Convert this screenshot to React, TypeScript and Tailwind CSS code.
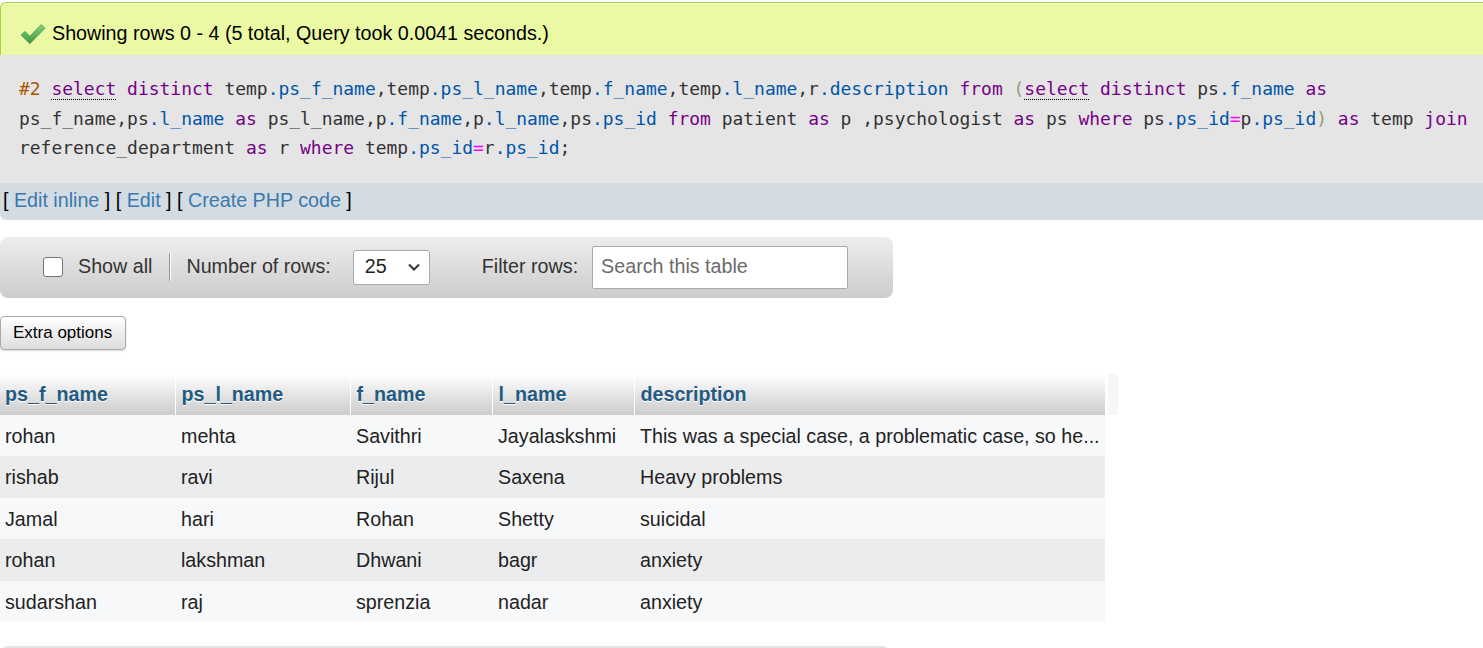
import React from "react";

type Tok = [string, string?];

const C: Record<string, string> = {
  c: "text-[#aa5500]",
  k: "text-[#770088]",
  v: "text-[#0055aa]",
  o: "text-[#ff00ff]",
  b: "text-[#999977]",
  u: "text-[#770088] border-b border-dotted border-black",
};

const lines: Tok[][] = [
  [
    ["#2", "c"], [" "], ["select", "u"], [" "], ["distinct", "k"], [" temp"], [".ps_f_name", "v"], [",temp"], [".ps_l_name", "v"], [",temp"], [".f_name", "v"], [",temp"], [".l_name", "v"], [",r"], [".description", "v"], [" "], ["from", "k"], [" "], ["(", "b"], ["select", "u"], [" "], ["distinct", "k"], [" ps"], [".f_name", "v"], [" "], ["as", "k"],
  ],
  [
    ["ps_f_name,ps"], [".l_name", "v"], [" "], ["as", "k"], [" ps_l_name,p"], [".f_name", "v"], [",p"], [".l_name", "v"], [",ps"], [".ps_id", "v"], [" "], ["from", "k"], [" patient "], ["as", "k"], [" p ,psychologist "], ["as", "k"], [" ps "], ["where", "k"], [" ps"], [".ps_id", "v"], ["=", "o"], ["p"], [".ps_id", "v"], [")", "b"], [" "], ["as", "k"], [" temp "], ["join", "k"],
  ],
  [
    ["reference_department "], ["as", "k"], [" r "], ["where", "k"], [" temp"], [".ps_id", "v"], ["=", "o"], ["r"], [".ps_id", "v"], [";"],
  ],
];

const rows = [
  ["rohan", "mehta", "Savithri", "Jayalaskshmi", "This was a special case, a problematic case, so he..."],
  ["rishab", "ravi", "Rijul", "Saxena", "Heavy problems"],
  ["Jamal", "hari", "Rohan", "Shetty", "suicidal"],
  ["rohan", "lakshman", "Dhwani", "bagr", "anxiety"],
  ["sudarshan", "raj", "sprenzia", "nadar", "anxiety"],
];

const cols = ["ps_f_name", "ps_l_name", "f_name", "l_name", "description"];
const widths = ["w-[175px]", "w-[175px]", "w-[142px]", "w-[142px]", "w-[471px]"];
const pads = ["pl-[5px]", "pl-[6px]", "pl-[6px]", "pl-[6px]", "pl-[6px]"];

function Check() {
  return (
    <svg width="26" height="24" viewBox="0 0 25 23" className="shrink-0 mt-[1px]">
      <defs>
        <linearGradient id="g" x1="0" y1="0" x2="0" y2="1">
          <stop offset="0" stopColor="#86d07a" />
          <stop offset="1" stopColor="#3f9a42" />
        </linearGradient>
      </defs>
      <path d="M1 12.5 L4.8 9 L9.5 13.6 L20.5 2.5 L24 6 L9.5 20.8 Z" fill="url(#g)" stroke="#4c9f4c" strokeWidth="0.8" strokeLinejoin="round" />
    </svg>
  );
}

export default function App() {
  return (
    <div className="h-[648px] w-[1483px] overflow-hidden bg-white font-['Liberation_Sans',Arial,sans-serif] text-[19.7px] text-[#222]">
      {/* success */}
      <div className="mt-[2px] h-[53px] flex items-start pt-[18px] pl-[19px] bg-[#ebf8a4] border-t border-l border-[#a2d246] rounded-tl-[6px] shadow-[inset_0_1px_0_#f6fcd4]">
        <Check />
        <span className="ml-[6px] text-black leading-[24px]">Showing rows 0 - 4 (5 total, Query took 0.0041 seconds.)</span>
      </div>
      {/* sql */}
      <div className="bg-[#e5e5e5] pt-[19px] pb-[20px] pl-[19px] font-['DejaVu_Sans_Mono',monospace] text-[17.97px] leading-[29.5px] text-[#333] whitespace-pre">
        {lines.map((l, i) => (
          <div key={i}>
            {l.map((t, j) => (
              <span key={j} className={t[1] ? C[t[1]] : ""}>{t[0]}</span>
            ))}
          </div>
        ))}
      </div>
      {/* links */}
      <div className="h-[37px] bg-[#d3dce3] rounded-bl-[6px] flex items-center pl-[3px] text-black">
        <span>[ <span className="text-[#3a79ad]">Edit inline</span> ] [ <span className="text-[#3a79ad]">Edit</span> ] [ <span className="text-[#3a79ad]">Create PHP code</span> ]</span>
      </div>
      {/* nav */}
      <div className="mt-[17px] w-[893px] h-[61px] rounded-[8px] bg-gradient-to-b from-[#eeeeee] to-[#cccccc] flex items-center pl-[43px] text-[#333]">
        <div className="w-[20px] h-[20px] bg-white border border-[#767676] rounded-[3px]" />
        <span className="ml-[15px]">Show all</span>
        <div className="ml-[17px] h-[28px] w-[2px] border-l border-[#999] border-r border-r-white" />
        <span className="ml-[15px]">Number of rows:</span>
        <div className="ml-[22px] w-[77px] h-[35px] bg-white border border-[#aaa] rounded-[3px] flex items-center justify-between pl-[11px] pr-[8px] text-[#222]">
          <span>25</span>
          <svg width="14" height="14" viewBox="0 0 14 14"><path d="M2 4.5 L7 9.5 L12 4.5" fill="none" stroke="#333" strokeWidth="2" /></svg>
        </div>
        <span className="ml-[52px]">Filter rows:</span>
        <div className="ml-[14px] w-[256px] h-[43px] bg-white border border-[#aaa] rounded-[2px] flex items-center pl-[8px] text-[#6b6b6b]">
          Search this table
        </div>
      </div>
      {/* extra options */}
      <div className="mt-[18px] w-[126px] h-[34px] rounded-[4px] border border-[#aaa] bg-gradient-to-b from-white to-[#dddddd] shadow-[0_1px_2px_rgba(0,0,0,0.15)] flex items-center pl-[12px] text-[17px] text-black">
        Extra options
      </div>
      {/* table */}
      <div className="mt-[24px] flex items-start">
        <table className="table-fixed border-collapse w-[1105px]">
          <thead>
            <tr className="h-[41px] bg-gradient-to-b from-white to-[#cccccc]">
              {cols.map((c, i) => (
                <th key={c} className={`${widths[i]} ${pads[i]} pt-[2px] text-left font-bold text-[#235a81] ${i < 4 ? "border-r border-white" : ""} [text-shadow:0_1px_0_#fff]`}>{c}</th>
              ))}
            </tr>
          </thead>
          <tbody>
            {rows.map((r, i) => (
              <tr key={i} className={`h-[41.5px] ${i % 2 === 0 ? "bg-[#f7f8fa]" : "bg-[#ebecee]"}`}>
                {r.map((v, j) => (
                  <td key={j} className={`${pads[j]} pt-[3px] whitespace-nowrap overflow-hidden text-[#222]`}>{v}</td>
                ))}
              </tr>
            ))}
          </tbody>
        </table>
        <div className="ml-[3px] w-[10px] h-[41px] bg-[#f5f6f8]" />
      </div>
      {/* next nav top */}
      <div className="mt-[24px] w-[890px] h-[60px] rounded-[8px] bg-gradient-to-b from-[#e6e6e6] to-[#cccccc]" />
    </div>
  );
}
